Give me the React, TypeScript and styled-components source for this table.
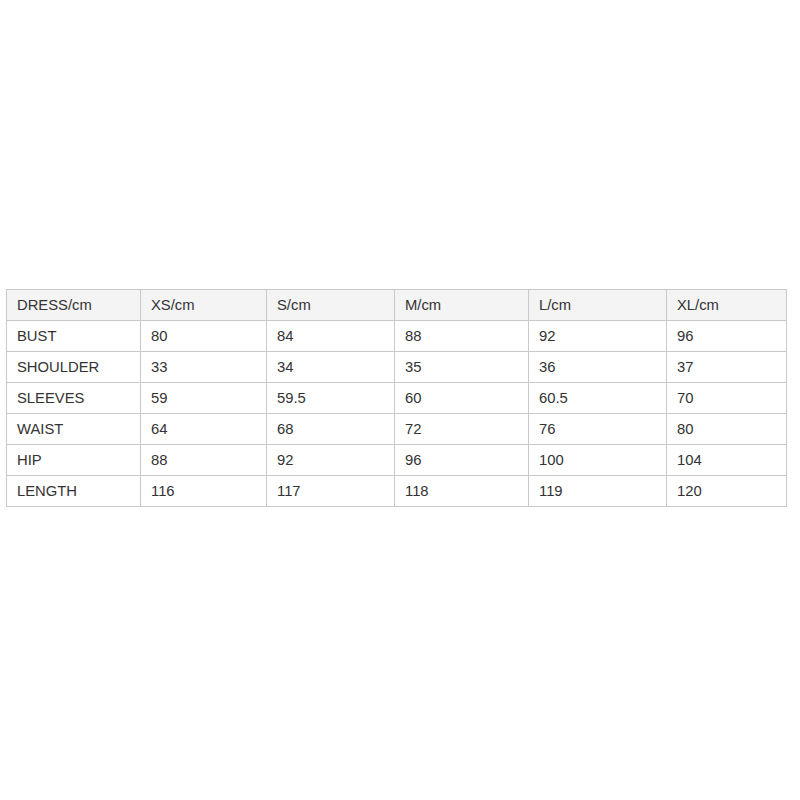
import React from "react";
import styled, { createGlobalStyle } from "styled-components";

const GlobalStyle = createGlobalStyle`
  html, body {
    margin: 0;
    padding: 0;
    background: #ffffff;
  }
  body {
    font-family: "Liberation Sans", Arial, sans-serif;
  }
`;

const Page = styled.main`
  height: 800px;
  display: flex;
  align-items: flex-start;
  padding: 289px 0 0 6px;
  box-sizing: border-box;
`;

const SizeTable = styled.table`
  width: 780px;
  border-collapse: collapse;
  table-layout: fixed;
  color: #333333;
  font-size: 14.8px;
`;

const HeadCell = styled.th<{ $w: number }>`
  width: ${(p) => p.$w}px;
  height: 31px;
  box-sizing: border-box;
  padding: 0 10px 1px;
  text-align: left;
  font-weight: normal;
  background: #f4f4f5;
  border: 1px solid #c9c9c9;
`;

const Cell = styled.td`
  height: 31px;
  box-sizing: border-box;
  padding: 0 10px 1px;
  border: 1px solid #c9c9c9;
`;

const widths = [134, 126, 128, 134, 138, 120];
const headers = ["DRESS/cm", "XS/cm", "S/cm", "M/cm", "L/cm", "XL/cm"];

const rows: string[][] = [
  ["BUST", "80", "84", "88", "92", "96"],
  ["SHOULDER", "33", "34", "35", "36", "37"],
  ["SLEEVES", "59", "59.5", "60", "60.5", "70"],
  ["WAIST", "64", "68", "72", "76", "80"],
  ["HIP", "88", "92", "96", "100", "104"],
  ["LENGTH", "116", "117", "118", "119", "120"],
];

export default function App() {
  return (
    <>
      <GlobalStyle />
      <Page>
        <SizeTable>
          <thead>
            <tr>
              {headers.map((h, i) => (
                <HeadCell key={h} $w={widths[i]}>
                  {h}
                </HeadCell>
              ))}
            </tr>
          </thead>
          <tbody>
            {rows.map((r) => (
              <tr key={r[0]}>
                {r.map((v, i) => (
                  <Cell key={i}>{v}</Cell>
                ))}
              </tr>
            ))}
          </tbody>
        </SizeTable>
      </Page>
    </>
  );
}
